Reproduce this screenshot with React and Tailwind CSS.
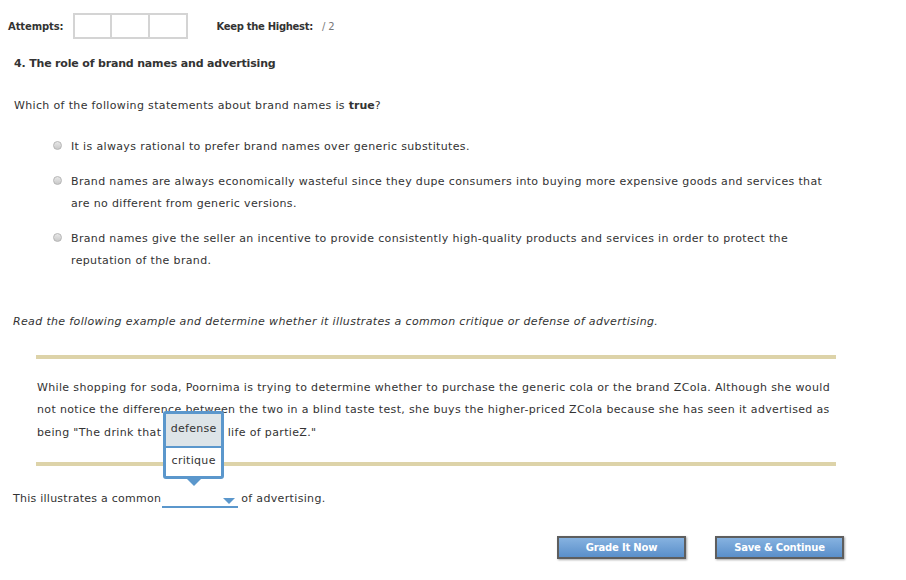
import React from "react";

const body = { fontFamily: '"DejaVu Sans", Verdana, sans-serif' };

function Radio() {
  return (
    <span className="mt-[5px] inline-block h-[9px] w-[9px] shrink-0 rounded-full border border-[#b5b5b5] bg-gradient-to-b from-[#e8e8e8] to-[#c9c9c9]" />
  );
}

function Option({ children }) {
  return (
    <div className="flex gap-[9px] pl-[53px]">
      <Radio />
      <p className="leading-[22px] w-[762px]">{children}</p>
    </div>
  );
}

function Btn({ children }) {
  return (
    <button
      className="h-[23px] w-[129px] border-2 border-[#5e5e5e] bg-gradient-to-b from-[#86b2e0] to-[#5a8fca] text-[10px] font-bold tracking-[-0.2px] text-white shadow-[1px_1px_2px_rgba(0,0,0,0.35)]"
      style={{ fontFamily: 'Tahoma, "DejaVu Sans", sans-serif' }}
    >
      {children}
    </button>
  );
}

export default function App() {
  return (
    <div className="w-[906px] h-[580px] bg-white text-[#333] text-[11px] tracking-[0.35px] relative" style={body}>
      <div className="flex items-center pl-[8px] pt-[13px] tracking-[-0.1px]">
        <span className="font-bold text-[10px] text-[#333]">Attempts:</span>
        <div className="ml-[9px] flex">
          <div className="h-[26px] w-[39px] border-2 border-[#d4d4d4]" />
          <div className="h-[26px] w-[38px] border-2 border-l-0 border-[#d4d4d4]" />
          <div className="h-[26px] w-[38px] border-2 border-l-0 border-[#d4d4d4]" />
        </div>
        <span className="ml-[29px] text-[10px] font-bold tracking-[-0.3px]">Keep the Highest:</span>
        <span className="ml-[9px] text-[10px] text-[#777]">/ 2</span>
      </div>
      <h2 className="pl-[14px] mt-[17px] font-bold text-[11px] tracking-[-0.17px]">4. The role of brand names and advertising</h2>
      <p className="pl-[14px] mt-[25px]">
        Which of the following statements about brand names is <b className="tracking-normal">true</b>?
      </p>
      <div className="mt-[22px] flex flex-col gap-[13px]">
        <Option>It is always rational to prefer brand names over generic substitutes.</Option>
        <Option>
          Brand names are always economically wasteful since they dupe consumers into buying more expensive goods and services that are no different from generic versions.
        </Option>
        <Option>
          Brand names give the seller an incentive to provide consistently high-quality products and services in order to protect the reputation of the brand.
        </Option>
      </div>
      <p className="pl-[13px] mt-[42px] italic">
        Read the following example and determine whether it illustrates a common critique or defense of advertising.
      </p>
      <div className="ml-[36px] w-[800px] mt-[24px]">
        <div className="h-[4px] bg-[#ddd3a9]" />
        <p className="leading-[22.5px] pt-[18px] pb-[18px] pl-[1px] pr-[2px]">
          While shopping for soda, Poornima is trying to determine whether to purchase the generic cola or the brand ZCola. Although she would not notice the difference between the two in a blind taste test, she buys the higher-priced ZCola because she has seen it advertised as being "The drink that tastes the life of partieZ."
        </p>
        <div className="h-[4px] bg-[#ddd3a9]" />
      </div>
      <div className="pl-[13px] mt-[25px] flex items-end relative">
        <span className="tracking-[0.25px]">This illustrates a common</span>
        <span className="relative ml-[1px] inline-block h-[16px] w-[76px] border-b-2 border-[#5b97cc]">
          <span className="absolute right-[3px] top-[6px] h-0 w-0 border-x-[6px] border-t-[6px] border-x-transparent border-t-[#5b97cc]" />
          <div className="absolute left-[1px] bottom-[27px] w-[61px] rounded-[3px] border-[3px] border-[#5b97cc] bg-white tracking-[0.3px]">
            <div className="h-[32px] bg-[#dde4e8] flex items-center justify-center text-[#333]">defense</div>
            <div className="h-[2px] bg-[#5b97cc]" />
            <div className="h-[28px] flex items-center justify-center text-[#333]">critique</div>
            <span className="absolute left-1/2 -translate-x-1/2 -bottom-[10px] h-0 w-0 border-x-[7px] border-t-[7px] border-x-transparent border-t-[#5b97cc]" />
          </div>
        </span>
        <span className="ml-[3px]">of advertising.</span>
      </div>
      <div className="flex gap-[29px] pl-[557px] mt-[28px]">
        <Btn>Grade It Now</Btn>
        <Btn>Save &amp; Continue</Btn>
      </div>
    </div>
  );
}
